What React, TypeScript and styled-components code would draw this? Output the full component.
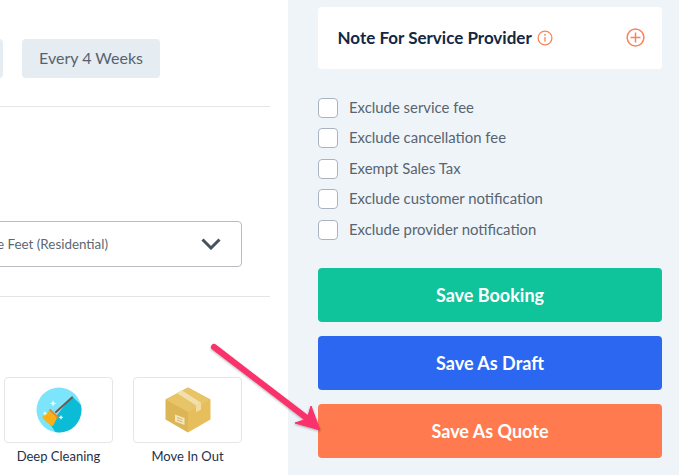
import React from "react";
import styled, { createGlobalStyle } from "styled-components";

const Global = createGlobalStyle`
  html, body { margin: 0; padding: 0; background: #fff; }
  body { font-family: "Lato", "Liberation Sans", sans-serif; }
`;

const Page = styled.div`
  position: relative;
  display: flex;
  width: 679px;
  height: 475px;
  overflow: hidden;
`;

const Main = styled.main`
  flex: 0 0 288px;
  width: 288px;
  padding-right: 18px;
  box-sizing: border-box;
  overflow: hidden;
  display: flex;
  flex-direction: column;
  align-items: flex-end;
`;

const FrequencyRow = styled.div`
  display: flex;
  justify-content: flex-end;
  gap: 19px;
  width: 270px;
  padding: 39px 110px 0 0;
  box-sizing: border-box;
  flex: none;
`;

const FrequencyButton = styled.button`
  flex: none;
  height: 39px;
  padding: 0 0 2px;
  width: ${(p) => p.$width}px;
  border: 0;
  border-radius: 4px;
  background: #e5ecf2;
  color: #55636f;
  font: 400 16px "Lato", sans-serif;
`;

const Divider = styled.hr`
  flex: none;
  width: 270px;
  height: 1px;
  margin: ${(p) => p.$top}px 0 0;
  border: 0;
  background: #e3e5e8;
`;

const SelectBox = styled.div`
  flex: none;
  width: 300px;
  height: 46px;
  margin: 114px 28px 0 0;
  padding: 0 20px;
  display: flex;
  align-items: center;
  justify-content: flex-end;
  gap: 93px;
  box-sizing: border-box;
  border: 1px solid #b8bcc0;
  border-radius: 4px;
  color: #5b6873;
  font-size: 13.4px;
  white-space: nowrap;
`;

const ServiceRow = styled.div`
  flex: none;
  display: flex;
  gap: 20px;
  margin: 80px 28px 0 0;
`;

const Service = styled.div`
  width: 109px;
  display: flex;
  flex-direction: column;
  align-items: center;
`;

const ServiceCard = styled.div`
  width: 109px;
  height: 66px;
  box-sizing: border-box;
  border: 1px solid #e3e5e8;
  border-radius: 4px;
  display: flex;
  align-items: center;
  justify-content: center;
`;

const ServiceLabel = styled.div`
  margin-top: 5px;
  font-size: 13px;
  line-height: 16px;
  color: #1f3148;
`;

const Side = styled.aside`
  flex: 0 0 391px;
  width: 391px;
  background: #eff4f9;
  padding: 7px 17px 0 30px;
  box-sizing: border-box;
  display: flex;
  flex-direction: column;
`;

const NoteCard = styled.div`
  height: 62px;
  flex: none;
  background: #fff;
  border-radius: 4px;
  display: flex;
  align-items: center;
  padding: 0 19px 1px 19.5px;
  box-sizing: border-box;
`;

const NoteTitle = styled.div`
  font-size: 17px;
  font-weight: 700;
  color: #14273f;
  margin-right: 5px;
  white-space: nowrap;
`;

const NoteIcon = styled.svg`
  flex: none;
  display: block;
  margin-left: ${(p) => p.$left || 0}px;
`;

const Checks = styled.div`
  display: flex;
  flex-direction: column;
  gap: 10.4px;
  margin-top: 29px;
`;

const CheckRow = styled.label`
  display: flex;
  align-items: center;
  gap: 11px;
  height: 20px;
  color: #58646f;
  font-size: 14.9px;
`;

const CheckText = styled.span`
  padding-bottom: 2px;
`;

const CheckBox = styled.span`
  width: 20px;
  height: 20px;
  box-sizing: border-box;
  background: #fff;
  border: 1px solid #a9b4c0;
  border-radius: 4px;
  flex: none;
`;

const Actions = styled.div`
  display: flex;
  flex-direction: column;
  gap: 14px;
  margin-top: 28px;
`;

const ActionButton = styled.button`
  height: 54px;
  border: 0;
  border-radius: 4px;
  background: ${(p) => p.$color};
  color: #fff;
  font: 700 18px "Lato", sans-serif;
`;

const ArrowOverlay = styled.svg`
  position: absolute;
  left: 200px;
  top: 335px;
  pointer-events: none;
`;

const Broom = () => (
  <svg width="46" height="46" viewBox="0 0 46 46">
    <defs>
      <clipPath id="disc"><circle cx="23" cy="23" r="22.5" /></clipPath>
    </defs>
    <circle cx="23" cy="23" r="22.5" fill="#7ce5fb" />
    <path d="M36 9 L46 19 V46 H20 L14 37 Z" fill="#0cbcd6" clipPath="url(#disc)" />
    <path d="M36 10.5 L20 25" stroke="#7a5548" strokeWidth="2" strokeLinecap="round" />
    <path d="M13 24 L21 31 L17 39 C13 38 8 33 6 30 Z" fill="#fbb116" />
    <path d="M13.5 22.5 L22 30.5" stroke="#ee8a1f" strokeWidth="2.4" />
    <g fill="#dffaff">
      <path d="M17 13 l1 2.4 2.4 1 -2.4 1 -1 2.4 -1 -2.4 -2.4 -1 2.4 -1z" />
      <path d="M9 24 l.8 1.6 1.6.8 -1.6.8 -.8 1.6 -.8 -1.6 -1.6 -.8 1.6 -.8z" />
      <path d="M25 28 l.8 1.6 1.6.8 -1.6.8 -.8 1.6 -.8 -1.6 -1.6 -.8 1.6 -.8z" />
    </g>
  </svg>
);

const Parcel = () => (
  <svg width="46" height="46" viewBox="0 0 46 46">
    <path d="M23 0.5 L45.5 12.5 V32.5 L23 45.5 Z" fill="#e6bf5c" />
    <path d="M23 0.5 L0.5 12.5 V32.5 L23 45.5 Z" fill="#dcb556" />
    <path d="M23 0.5 L45.5 12.5 L23 25 L0.5 12.5 Z" fill="#e8c468" />
    <path d="M11.7 6 L16.7 3.3 L36 15.7 L31 18.3 Z" fill="#f2e0ac" />
    <path d="M31 18.3 L36 15.7 V22.7 L31 25 Z" fill="#f2dca0" />
    <path d="M10 27.5 L19.5 31 V38 L10 34.5 Z" fill="#f3e6bf" />
    <path d="M12 30.5 L17.5 32.5 M12 33 L17.5 35" stroke="#cfb068" strokeWidth="0.9" />
  </svg>
);

const checks = [
  "Exclude service fee",
  "Exclude cancellation fee",
  "Exempt Sales Tax",
  "Exclude customer notification",
  "Exclude provider notification",
];

export default function App() {
  return (
    <Page>
      <Global />
      <Main>
        <FrequencyRow>
          <FrequencyButton $width={120} aria-label="Every 2 Weeks" />
          <FrequencyButton $width={138}>Every 4 Weeks</FrequencyButton>
        </FrequencyRow>
        <Divider $top={28} />
        <SelectBox>
          <span>Square Feet (Residential)</span>
          <svg width="20" height="12" viewBox="0 0 20 12">
            <path d="M1.5 1.5 L10 10 L18.5 1.5" fill="none" stroke="#46535f" strokeWidth="3" />
          </svg>
        </SelectBox>
        <Divider $top={29} />
        <ServiceRow>
          <Service>
            <ServiceCard><Broom /></ServiceCard>
            <ServiceLabel>Deep Cleaning</ServiceLabel>
          </Service>
          <Service>
            <ServiceCard><Parcel /></ServiceCard>
            <ServiceLabel>Move In Out</ServiceLabel>
          </Service>
        </ServiceRow>
      </Main>
      <Side>
        <NoteCard>
          <NoteTitle>Note For Service Provider</NoteTitle>
          <NoteIcon width="16" height="16" viewBox="0 0 16 16">
            <circle cx="8" cy="8" r="6.9" fill="none" stroke="#ff8157" strokeWidth="1.3" />
            <path d="M8 7 V11.8" stroke="#ff8157" strokeWidth="1.3" />
            <circle cx="8" cy="4.9" r="0.9" fill="#ff8157" />
          </NoteIcon>
          <NoteIcon $left={73} width="19" height="19" viewBox="0 0 19 19">
            <circle cx="9.5" cy="9.5" r="8.4" fill="none" stroke="#ff8157" strokeWidth="1.5" />
            <path d="M4.5 9.5 H14.5 M9.5 4.5 V14.5" stroke="#ff8157" strokeWidth="1.5" />
          </NoteIcon>
        </NoteCard>
        <Checks>
          {checks.map((c) => (
            <CheckRow key={c}>
              <CheckBox />
              <CheckText>{c}</CheckText>
            </CheckRow>
          ))}
        </Checks>
        <Actions>
          <ActionButton $color="#0fc39a">Save Booking</ActionButton>
          <ActionButton $color="#2c67f2">Save As Draft</ActionButton>
          <ActionButton $color="#ff7b4f">Save As Quote</ActionButton>
        </Actions>
      </Side>
      <ArrowOverlay width="130" height="110" viewBox="0 0 130 110">
        <defs>
          <filter id="arrowShadow" x="-20%" y="-20%" width="140%" height="140%">
            <feDropShadow dx="0" dy="1" stdDeviation="1.2" floodColor="#333" floodOpacity="0.4" />
          </filter>
        </defs>
        <g filter="url(#arrowShadow)" fill="#f9316c">
          <path d="M14 12 L108 84" stroke="#f9316c" strokeWidth="6" strokeLinecap="round" />
          <path d="M111 71 L120 95 L95 88 L107 84 Z" stroke="#f9316c" strokeWidth="1" strokeLinejoin="round" />
        </g>
      </ArrowOverlay>
    </Page>
  );
}
